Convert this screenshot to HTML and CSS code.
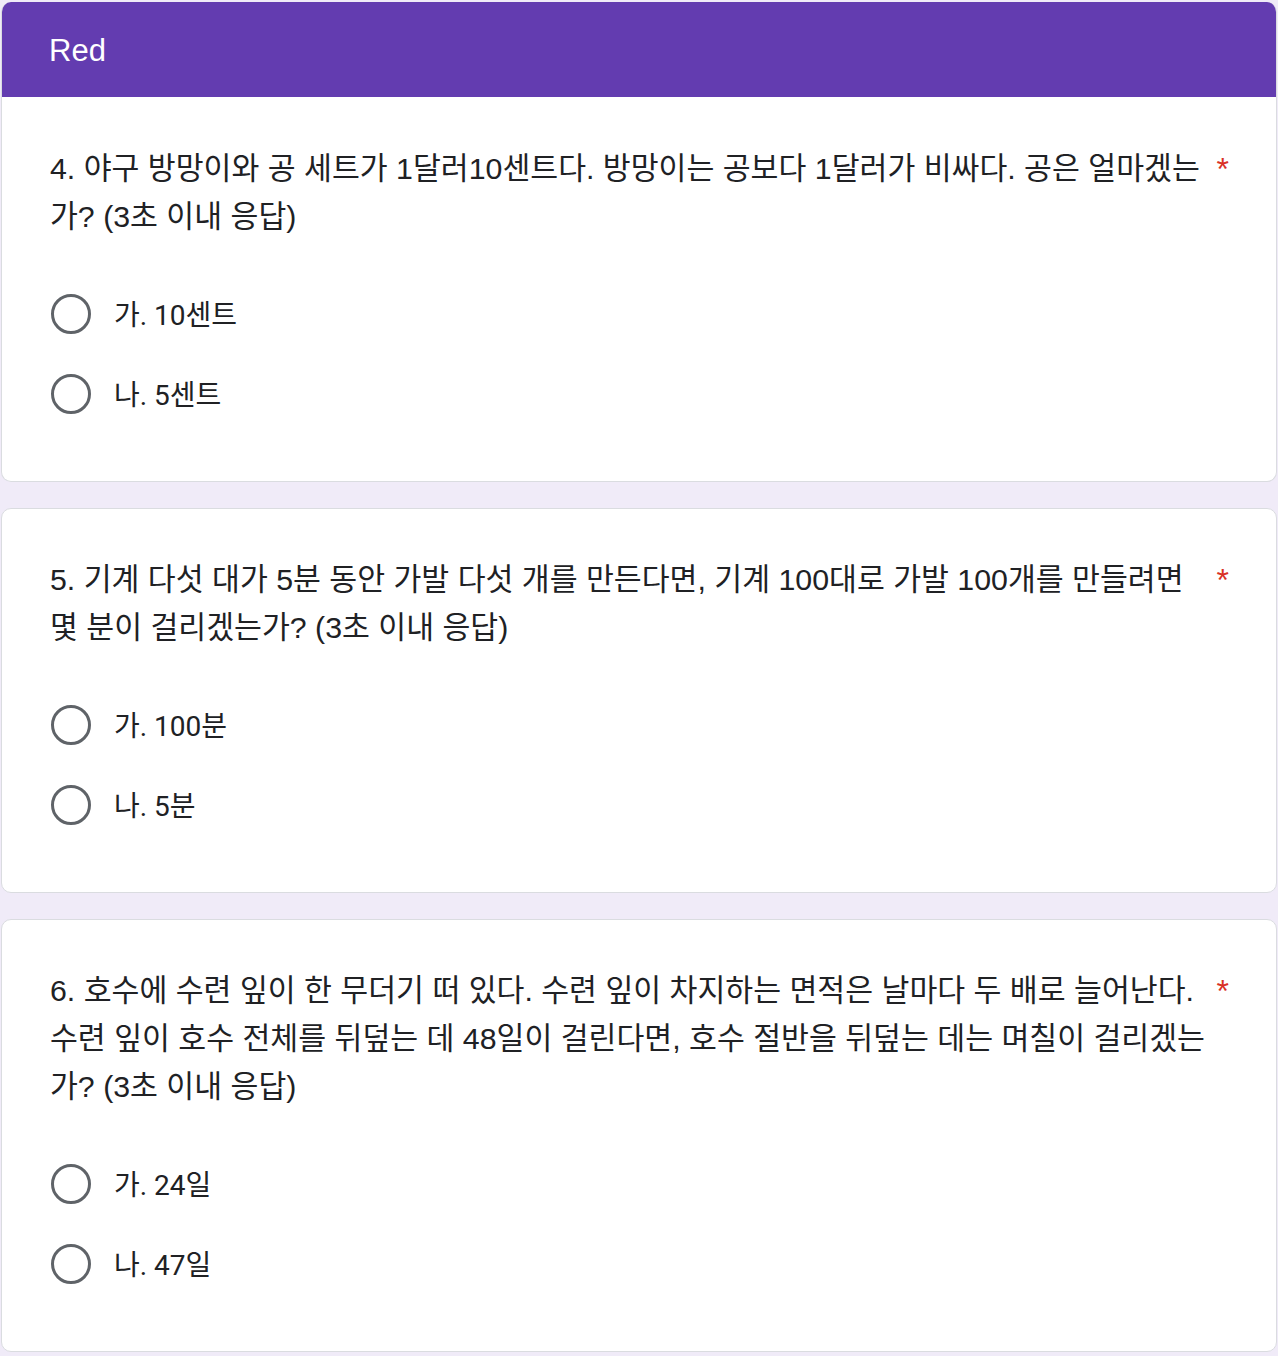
FILE: index.html
```html
<!DOCTYPE html>
<html lang="ko">
<head>
<meta charset="utf-8">
<title>Red</title>
<link rel="stylesheet" href="styles.css">
</head>
<body>
<main class="form">
  <section class="card card-first">
    <header class="card-header">Red</header>
    <div class="card-body">
      <div class="question">
        <span class="q-text">4. 야구 방망이와 공 세트가 1달러10센트다. 방망이는 공보다 1달러가 비싸다. 공은 얼마겠는가? (3초 이내 응답)</span>
        <span class="req">*</span>
      </div>
      <ul class="options">
        <li class="option"><span class="radio"></span><span class="opt-text">가. 10센트</span></li>
        <li class="option"><span class="radio"></span><span class="opt-text">나. 5센트</span></li>
      </ul>
    </div>
  </section>

  <section class="card">
    <div class="card-body">
      <div class="question">
        <span class="q-text">5. 기계 다섯 대가 5분 동안 가발 다섯 개를 만든다면, 기계 100대로 가발 100개를 만들려면 몇 분이 걸리겠는가? (3초 이내 응답)</span>
        <span class="req">*</span>
      </div>
      <ul class="options">
        <li class="option"><span class="radio"></span><span class="opt-text">가. 100분</span></li>
        <li class="option"><span class="radio"></span><span class="opt-text">나. 5분</span></li>
      </ul>
    </div>
  </section>

  <section class="card">
    <div class="card-body">
      <div class="question">
        <span class="q-text">6. 호수에 수련 잎이 한 무더기 떠 있다. 수련 잎이 차지하는 면적은 날마다 두 배로 늘어난다. 수련 잎이 호수 전체를 뒤덮는 데 48일이 걸린다면, 호수 절반을 뒤덮는 데는 며칠이 걸리겠는가? (3초 이내 응답)</span>
        <span class="req">*</span>
      </div>
      <ul class="options">
        <li class="option"><span class="radio"></span><span class="opt-text">가. 24일</span></li>
        <li class="option"><span class="radio"></span><span class="opt-text">나. 47일</span></li>
      </ul>
    </div>
  </section>
</main>
</body>
</html>
```

FILE: styles.css
```css
* { box-sizing: border-box; }

html, body {
  margin: 0;
  padding: 0;
  background: #f0ebf8;
}

body {
  font-family: "Liberation Sans", "Noto Sans CJK KR", sans-serif;
  color: #202124;
}

.form {
  display: flex;
  flex-direction: column;
  gap: 26px;
  padding: 2px 1px 2px 1px;
}

.card {
  background: #ffffff;
  border: 1px solid #dadce0;
  border-radius: 10px;
  overflow: hidden;
}

.card-first {
  border-top: none;
}

.card-header {
  background: #633cb0;
  color: #ffffff;
  height: 95px;
  padding-left: 48px;
  padding-top: 2px;
  display: flex;
  align-items: center;
  font-size: 31px;
  line-height: 1;
  margin: 0 -1px;
}

.card-body {
  padding: 47px 47px 63px 48px;
}

.card-first .card-body {
  padding-top: 48px;
}

.question {
  display: flex;
  align-items: flex-start;
  font-size: 30.3px;
  line-height: 48px;
}

.q-text {
  flex: 1;
  max-width: 1160px;
}

.req {
  color: #d93025;
  padding-left: 4px;
  margin-left: auto;
  font-size: 32px;
}

.options {
  list-style: none;
  margin: 49px 0 0 0;
  padding: 0;
  display: flex;
  flex-direction: column;
  gap: 32px;
}

.option {
  display: flex;
  align-items: center;
  height: 48px;
  font-family: Roboto, "Noto Sans CJK KR", sans-serif;
  font-size: 28px;
}

.radio {
  width: 40px;
  height: 40px;
  border: 3.5px solid #5f6368;
  border-radius: 50%;
  margin-left: 1px;
  flex-shrink: 0;
}

.opt-text {
  margin-left: 23px;
  margin-top: -2px;
}
```
